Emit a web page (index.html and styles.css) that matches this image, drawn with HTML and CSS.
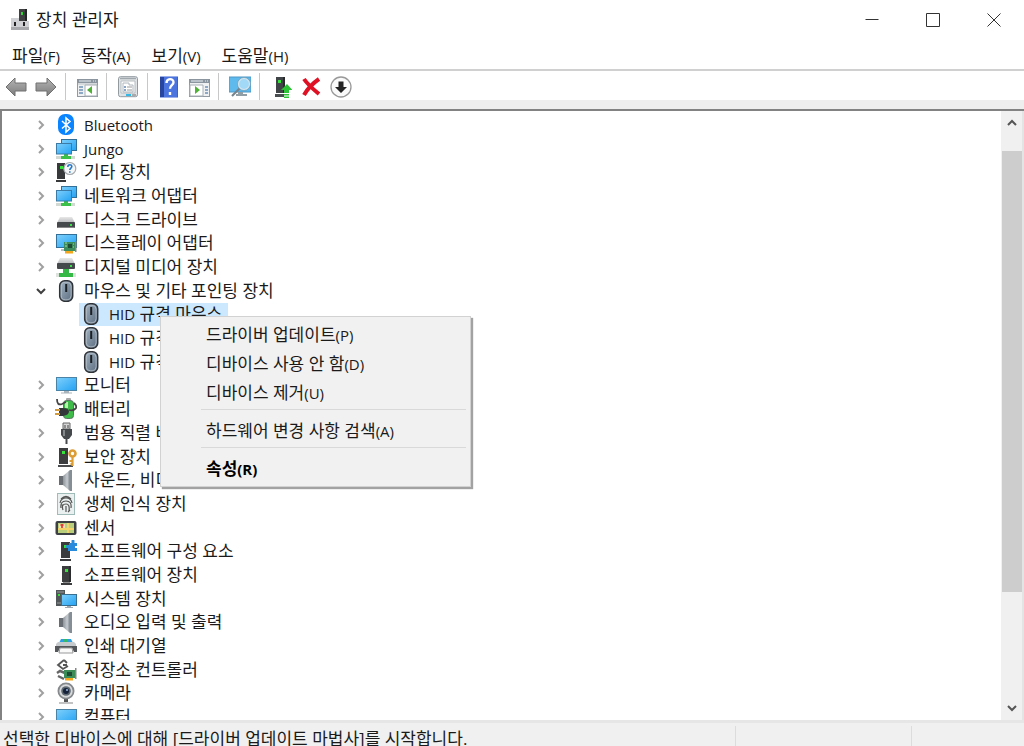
FILE: index.html
```html
<!DOCTYPE html>
<html lang="ko">
<head>
<meta charset="utf-8">
<meta name="viewport" content="width=device-width, initial-scale=1">
<title>장치 관리자</title>
<link rel="stylesheet" href="styles.css">
</head>
<body>
<svg class="sprite" aria-hidden="true">
  <defs>
    <linearGradient id="g-screen" x1="0" y1="0" x2="1" y2="1"><stop offset="0" stop-color="#7fd0fb"/><stop offset="1" stop-color="#22a2f3"/></linearGradient>
    <linearGradient id="g-grey" x1="0" y1="0" x2="0" y2="1"><stop offset="0" stop-color="#e8e8e8"/><stop offset="1" stop-color="#b4b7b9"/></linearGradient>
    <linearGradient id="g-arrow" x1="0" y1="0" x2="0" y2="1"><stop offset="0" stop-color="#b5b5b5"/><stop offset="1" stop-color="#7c7c7c"/></linearGradient>
    <linearGradient id="g-cone" x1="0" y1="0" x2="1" y2="0"><stop offset="0" stop-color="#8d9499"/><stop offset=".6" stop-color="#c5cbd0"/><stop offset="1" stop-color="#7d858b"/></linearGradient>
    <linearGradient id="g-mouse" x1="0" y1="0" x2="1" y2="1"><stop offset="0" stop-color="#a3b4c4"/><stop offset="1" stop-color="#596b7d"/></linearGradient>
    <symbol id="chev-r" viewBox="0 0 10 10"><path d="M3 1l4 4-4 4" fill="none" stroke="#a0a0a0" stroke-width="2"/></symbol>
    <symbol id="chev-d" viewBox="0 0 10 10"><path d="M1 3l4 4 4-4" fill="none" stroke="#404040" stroke-width="2"/></symbol>
    <symbol id="bluetooth" viewBox="0 0 22 22"><rect x="3" y="0" width="16" height="21" rx="7" fill="#0a84ff"/><path d="M7 7l8 7.500-4 3.500V4l4 3.500-8 7" fill="none" stroke="#fff" stroke-width="1.500"/></symbol>
    <symbol id="network" viewBox="0 0 22 22"><rect x="6.500" y="1.500" width="15" height="11" fill="url(#g-screen)" stroke="#326f99"/><path d="M1 18h19v3H1z" fill="#d2d8d2"/><path d="M9 15h4v3h3v3H6v-3h3z" fill="#3cc04a"/><rect x="1.500" y="5.500" width="15" height="10.500" fill="url(#g-screen)" stroke="#3b7ba5"/></symbol>
    <symbol id="tower" viewBox="0 0 22 22"><path d="M7 2h9v16H7z" fill="#3b3d3f"/><path d="M14 2h2v16h-2z" fill="#2b2c2d"/><path d="M6 19h11v2H6z" fill="#3a3c3d"/><path d="M8 18h7v1H8z" fill="#8b8b8b"/><rect x="10" y="5" width="3" height="3" fill="#35e33a"/></symbol>
    <symbol id="unknown" viewBox="0 0 22 22"><path d="M2 2h8v16H2z" fill="#37393a"/><path d="M1 19h10v2H1z" fill="#37393a"/><rect x="5" y="5" width="3" height="3" fill="#35e33a"/><circle cx="14.800" cy="7.500" r="6" fill="#f4f6f8" stroke="#a6aaad" stroke-width="1.200"/><path d="M12.800 6c0-3 4-3 4-.5 0 1.500-2 1.700-2 3.500M14.800 10.200v1.500" fill="none" stroke="#2779c7" stroke-width="1.600"/></symbol>
    <symbol id="disk" viewBox="0 0 22 22"><path d="M5 8h12l3 6H2z" fill="url(#g-grey)"/><rect x="2" y="13" width="18" height="6" rx="1" fill="#46494b"/><path d="M3 18h16v1H3z" fill="#888"/><rect x="15" y="15" width="2" height="2" fill="#3be34b"/></symbol>
    <symbol id="display" viewBox="0 0 22 22"><rect x="1.500" y="2.500" width="20" height="13" fill="url(#g-screen)" stroke="#326f99"/><path d="M6 17h5v2H6z" fill="#b8bec2"/><path d="M9 10h11v9H9z" fill="#3e8c5b"/><path d="M20 9h1.500v11H20z" fill="#888"/><rect x="13" y="12" width="4" height="4" fill="#1f4b35"/><path d="M10 11h2M10 14h2M18 12h1M18 15h1" stroke="#9ed9ae"/><path d="M10 19h8v2.500h-8z" fill="#f3a51c"/></symbol>
    <symbol id="media" viewBox="0 0 22 22"><path d="M5 2h12l3 6H2z" fill="url(#g-grey)"/><rect x="2" y="7" width="18" height="6" rx="1" fill="#46494b"/><rect x="15" y="9" width="2" height="2" fill="#3be34b"/><path d="M1 17h20v4H1z" fill="#dde2dd"/><path d="M8 13h6v4h4v4H4v-4h4z" fill="#35b846"/></symbol>
    <symbol id="mouse" viewBox="0 0 22 22"><rect x="4.700" y=".8" width="13" height="20.500" rx="5" fill="url(#g-mouse)" stroke="#2f3338" stroke-width="1.500"/><rect x="6.300" y="2.300" width="9.800" height="17.500" rx="4" fill="none" stroke="#b9c2ca" stroke-width=".8"/><path d="M11.200 4v8" stroke="#1c1f22" stroke-width="2"/></symbol>
    <symbol id="monitor" viewBox="0 0 22 22"><rect x="1.500" y="3.500" width="20" height="13" fill="url(#g-screen)" stroke="#4a83a6"/><path d="M9 17h5v1.500h3v1H6v-1h3z" fill="#aab3b9"/></symbol>
    <symbol id="battery" viewBox="0 0 22 22"><rect x="11" y="0" width="5" height="3" rx="1" fill="#a7a7a7"/><rect x="8.500" y="2.500" width="10" height="18" rx="3" fill="#3ebb49" stroke="#5b7766"/><path d="M10 4h3v6h-3z" fill="#b6f3ac"/><path d="M2 1q0 7 5 5l4-2M19 5q4 4 1 6-2 2-6 1" fill="none" stroke="#444" stroke-width="1.800"/><path d="M4 10h4q6 0 6 3.500T8 18H4z" fill="#343739"/><path d="M0 12h5M0 16h5" stroke="#d69c39" stroke-width="2"/></symbol>
    <symbol id="usb" viewBox="0 0 22 22"><path d="M8 1h7v6H8z" fill="#d6d6d6" stroke="#676767"/><path d="M9.500 3h1v3h-1zM12.500 3h1v3h-1z" fill="#444"/><path d="M6 7h11v6l-3 4H9l-3-4z" fill="#46494b"/><path d="M8 8h2v6H8z" fill="#85888a"/><path d="M10.500 16h2v6h-2z" fill="#46494b"/></symbol>
    <symbol id="security" viewBox="0 0 22 22"><path d="M4 2h9v16H4z" fill="#3b3d3e"/><path d="M3 19h15v2H3z" fill="#4a4c4e"/><rect x="7" y="5" width="3" height="3" fill="#35e33a"/><circle cx="17.500" cy="7.500" r="3" fill="none" stroke="#dc9d35" stroke-width="2.600"/><path d="M17.500 10v10M17.500 15h-3M17.500 18h-2" stroke="#dc9d35" stroke-width="2.200"/></symbol>
    <symbol id="speaker" viewBox="0 0 22 22"><path d="M4 7h4v9H4z" fill="#676d72"/><path d="M8 7l7-6v21l-7-6z" fill="url(#g-cone)"/><path d="M15 1h2v21h-2z" fill="#858e95"/></symbol>
    <symbol id="finger" viewBox="0 0 22 22"><rect x="2.500" y=".5" width="17" height="21" fill="#e9f0ef" stroke="#9fbcb9"/><g fill="none" stroke="#555" stroke-width="1.200"><path d="M6 6q5-5 10 0M5 10q1-5 6-5t6 5M6 15q-1-7 5-7t5 7M8 17q-2-6 3-6 4 0 3 7M11 13v6M6 12h2M13 19l2-2"/></g></symbol>
    <symbol id="sensor" viewBox="0 0 22 22"><rect x=".5" y="4" width="21" height="14" rx="2" fill="#3e4143"/><rect x="3" y="6" width="16" height="10" fill="#b9cf7d"/><path d="M3 12h16M13 6v10" stroke="#f5d36b" stroke-width="2"/><path d="M4 7h6v4H4z" fill="#eee2b3"/><path d="M7 7v4M5.500 8h3" stroke="#e14037" stroke-width="1.800"/></symbol>
    <symbol id="component" viewBox="0 0 22 22"><path d="M6 2h9v16H6z" fill="#393b3d"/><path d="M5 19h11v2H5z" fill="#393b3d"/><rect x="9" y="5" width="3" height="3" fill="#35e33a"/><path d="M14 3h2.500V1a1.500 1.500 0 0 1 3 0v2H22v3h-2v2h2v3h-9V8h-1a1.500 1.500 0 0 1 0-3h2z" fill="#288bdc"/></symbol>
    <symbol id="system" viewBox="0 0 22 22"><path d="M1 2h9v16H1z" fill="#515759"/><path d="M2 4h7M2 15h5" stroke="#999"/><rect x="3" y="6" width="2" height="2" fill="#35e33a"/><rect x="6.500" y="6.500" width="15" height="11" fill="url(#g-screen)" stroke="#386f91"/><path d="M12 18h4v1h2v1h-8v-1h2z" fill="#a0a9af"/></symbol>
    <symbol id="printer" viewBox="0 0 22 22"><path d="M6 4h10l2 4H4z" fill="#2e9ee2"/><path d="M9 4h4v3H9z" fill="#35b86a"/><path d="M1 9l2-2h16l2 2v3H1z" fill="#c7cacc"/><path d="M0 11h22v6h-3l-2-4H5l-2 4H0z" fill="#55585a"/><path d="M5 13h12l1 5H4z" fill="#fafafa" stroke="#999"/></symbol>
    <symbol id="storage" viewBox="0 0 22 22"><path d="M9 1L3 6l5 4 5-3M8 6h4M9 1l3 3" fill="none" stroke="#555" stroke-width="1.800"/><path d="M2 14l3-2 5 2M3 17l6 3" fill="none" stroke="#666" stroke-width="2.500"/><path d="M9 11h11v8H9z" fill="#3b8c57"/><path d="M20 9h1.500v11H20z" fill="#888"/><rect x="12" y="13" width="5" height="4" fill="#1f4b35"/><path d="M10 19h8v2.500h-8z" fill="#f3a51c"/></symbol>
    <symbol id="camera" viewBox="0 0 22 22"><path d="M9 17h4v3H9z" fill="#555"/><path d="M4 21h14" stroke="#aaa" stroke-width="1.400"/><circle cx="11" cy="9" r="7.600" fill="#d7d9da" stroke="#85898c" stroke-width="1.800"/><circle cx="11" cy="9" r="4.800" fill="#5e6870"/><circle cx="11" cy="9" r="3" fill="#16233b"/><circle cx="12" cy="8" r="1" fill="#9ab7dd"/></symbol>
  </defs>
</svg>

<div class="window">
  <header class="titlebar">
    <svg class="app-icon" viewBox="0 0 22 22" aria-hidden="true"><path d="M9 0h8v12H9z" fill="#3e4042"/><path d="M15 0h2v12h-2z" fill="#242526"/><rect x="11" y="3" width="2" height="3" fill="#35d33a"/><path d="M1 9h8v3h10v9H1z" fill="#cfd1d4"/><path d="M1 18h18v3H1z" fill="#a7a9ac"/><path d="M4 13h2v4H4zM13 13h2v4h-2z" fill="#222"/></svg>
    <h1 class="title">장치 관리자</h1>
    <div class="controls">
      <button class="control" type="button" aria-label="최소화"><svg viewBox="0 0 14 14"><path d="M.5 6.500h13"/></svg></button>
      <button class="control" type="button" aria-label="최대화"><svg viewBox="0 0 14 14"><path d="M.5.500h13v13H.5z"/></svg></button>
      <button class="control" type="button" aria-label="닫기"><svg viewBox="0 0 14 14"><path d="M.5.500l13 13M13.500.500l-13 13"/></svg></button>
    </div>
  </header>

  <nav class="menubar">
    <button type="button">파일<span class="key">(F)</span></button>
    <button type="button">동작<span class="key">(A)</span></button>
    <button type="button">보기<span class="key">(V)</span></button>
    <button type="button">도움말<span class="key">(H)</span></button>
  </nav>

  <div class="toolbar" role="toolbar">
    <button type="button" aria-label="뒤로"><svg viewBox="0 0 22 22"><path d="M1 11l9-9v5h11v8H10v5z" fill="url(#g-arrow)" stroke="#707070"/></svg></button>
    <button type="button" aria-label="앞으로"><svg viewBox="0 0 22 22"><path d="M21 11l-9-9v5H1v8h11v5z" fill="url(#g-arrow)" stroke="#707070"/></svg></button>
    <span class="sep"></span>
    <button type="button" aria-label="콘솔 트리 표시"><svg viewBox="0 0 22 22"><rect x="1.500" y="3.500" width="20" height="17" fill="#eef0f1" stroke="#9299a0"/><path d="M1 3h21v4H1z" fill="#8b95a0"/><path d="M3 5h12M17 5h1M19 5h1" stroke="#e8edf2"/><path d="M2 8h19" stroke="#bcc3c9"/><path d="M3 11h4M3 14h4M3 17h4" stroke="#6e91b7" stroke-width="1.500"/><path d="M9 9h12v11H9z" fill="#fff" stroke="#a7b0b5"/><path d="M16 10v8l-5-4z" fill="#4fb135"/></svg></button>
    <span class="sep"></span>
    <button type="button" aria-label="속성"><svg viewBox="0 0 22 22"><rect x="1.500" y=".7" width="19" height="20" rx="2" fill="#dfe3e6" stroke="#929aa0"/><path d="M3 2.500h16" stroke="#a1a9af" stroke-width="1.500"/><path d="M4 5h14v12H4z" fill="#fff" stroke="#b7bcc0"/><path d="M6 7h6v2h4v7H6z" fill="none" stroke="#aeb6bc"/><path d="M7 11h2M7 14h2" stroke="#6288b5" stroke-width="1.500"/><path d="M10 11h5M10 14h5" stroke="#999"/><path d="M9 19h5" stroke="#36b7e6" stroke-width="2"/><path d="M15 19h4" stroke="#aaa" stroke-width="2"/></svg></button>
    <span class="sep"></span>
    <button type="button" aria-label="도움말"><svg viewBox="0 0 22 22"><rect x="2" y=".5" width="18" height="21" fill="#3861d5"/><path d="M2 1h4v20H2z" fill="#27459f"/><path d="M6 1h13v20H6z" fill="#4c74df"/><path d="M8.500 7c0-5 7-5 7-.8 0 3-3.500 3-3.500 6.500M12 16v3" fill="none" stroke="#fff" stroke-width="2.400"/></svg></button>
    <button type="button" aria-label="동작 창 표시"><svg viewBox="0 0 22 22"><rect x="1.500" y="3.500" width="20" height="17" fill="#eef0f1" stroke="#9299a0"/><path d="M1 3h21v4H1z" fill="#8b95a0"/><path d="M3 5h12M17 5h1M19 5h1" stroke="#e8edf2"/><path d="M2 9h13v11H2z" fill="#fff" stroke="#a7b0b5"/><path d="M7 10v8l5-4z" fill="#4fb135"/><path d="M17 11h3M17 14h3M17 17h3" stroke="#6e91b7" stroke-width="1.500"/></svg></button>
    <span class="sep"></span>
    <button type="button" aria-label="하드웨어 변경 사항 검색"><svg viewBox="0 0 22 22"><rect x="0" y="1" width="22" height="15" fill="#5eb9ed" stroke="#4c9ac8"/><path d="M9 16h5v2h4v2H7v-2h2z" fill="#929ea5"/><path d="M11 12l-8 8" stroke="#76838b" stroke-width="2.200"/><circle cx="15" cy="8" r="5.700" fill="#a2d9f7" stroke="#d7e7ef" stroke-width="1.500"/><circle cx="15" cy="8" r="6.500" fill="none" stroke="#6e9ab2" stroke-width=".7"/></svg></button>
    <span class="sep"></span>
    <button type="button" aria-label="드라이버 업데이트"><svg viewBox="0 0 22 22"><path d="M6 1h9v16H6z" fill="#414447"/><path d="M13 1h2v16h-2z" fill="#292b2c"/><path d="M5 18h9v3H5z" fill="#4b4e50"/><rect x="8" y="4" width="3" height="3" fill="#35e33a"/><path d="M17 8l5.500 6H19v3h-5v-3h-3zM14 18h5v1.500h-5zM14 20.500h5V22h-5z" fill="#2dc337"/></svg></button>
    <button type="button" aria-label="디바이스 제거"><svg viewBox="0 0 22 22"><path d="M4 3q4 6 15 15M19 3Q9 10 4 19" fill="none" stroke="#de1224" stroke-width="4"/></svg></button>
    <button type="button" aria-label="사용 안 함"><svg viewBox="0 0 22 22"><circle cx="11" cy="11" r="10" fill="#fafafa" stroke="#999" stroke-width="1.300"/><path d="M8.500 5.500h5V11H17l-6 6-6-6h3.500z" fill="#222"/></svg></button>
  </div>

  <main class="pane">
    <ul class="tree" role="tree">
      <li class="row"><button class="toggle" type="button" aria-label="펼치기"><svg><use href="#chev-r"/></svg></button><span class="node"><svg class="icon"><use href="#bluetooth"/></svg><span class="latin">Bluetooth</span></span></li>
      <li class="row"><button class="toggle" type="button" aria-label="펼치기"><svg><use href="#chev-r"/></svg></button><span class="node"><svg class="icon"><use href="#network"/></svg><span class="latin">Jungo</span></span></li>
      <li class="row"><button class="toggle" type="button" aria-label="펼치기"><svg><use href="#chev-r"/></svg></button><span class="node"><svg class="icon"><use href="#unknown"/></svg>기타 장치</span></li>
      <li class="row"><button class="toggle" type="button" aria-label="펼치기"><svg><use href="#chev-r"/></svg></button><span class="node"><svg class="icon"><use href="#network"/></svg>네트워크 어댑터</span></li>
      <li class="row"><button class="toggle" type="button" aria-label="펼치기"><svg><use href="#chev-r"/></svg></button><span class="node"><svg class="icon"><use href="#disk"/></svg>디스크 드라이브</span></li>
      <li class="row"><button class="toggle" type="button" aria-label="펼치기"><svg><use href="#chev-r"/></svg></button><span class="node"><svg class="icon"><use href="#display"/></svg>디스플레이 어댑터</span></li>
      <li class="row"><button class="toggle" type="button" aria-label="펼치기"><svg><use href="#chev-r"/></svg></button><span class="node"><svg class="icon"><use href="#media"/></svg>디지털 미디어 장치</span></li>
      <li class="row"><button class="toggle" type="button" aria-label="접기"><svg><use href="#chev-d"/></svg></button><span class="node"><svg class="icon"><use href="#mouse"/></svg>마우스 및 기타 포인팅 장치</span></li>
      <li class="row child"><span class="node selected"><svg class="icon"><use href="#mouse"/></svg><span><span class="latin">HID</span> 규격 마우스</span></span></li>
      <li class="row child"><span class="node"><svg class="icon"><use href="#mouse"/></svg><span><span class="latin">HID</span> 규격 마우스</span></span></li>
      <li class="row child"><span class="node"><svg class="icon"><use href="#mouse"/></svg><span><span class="latin">HID</span> 규격 마우스</span></span></li>
      <li class="row"><button class="toggle" type="button" aria-label="펼치기"><svg><use href="#chev-r"/></svg></button><span class="node"><svg class="icon"><use href="#monitor"/></svg>모니터</span></li>
      <li class="row"><button class="toggle" type="button" aria-label="펼치기"><svg><use href="#chev-r"/></svg></button><span class="node"><svg class="icon"><use href="#battery"/></svg>배터리</span></li>
      <li class="row"><button class="toggle" type="button" aria-label="펼치기"><svg><use href="#chev-r"/></svg></button><span class="node"><svg class="icon"><use href="#usb"/></svg>범용 직렬 버스 컨트롤러</span></li>
      <li class="row"><button class="toggle" type="button" aria-label="펼치기"><svg><use href="#chev-r"/></svg></button><span class="node"><svg class="icon"><use href="#security"/></svg>보안 장치</span></li>
      <li class="row"><button class="toggle" type="button" aria-label="펼치기"><svg><use href="#chev-r"/></svg></button><span class="node"><svg class="icon"><use href="#speaker"/></svg>사운드, 비디오 및 게임 컨트롤러</span></li>
      <li class="row"><button class="toggle" type="button" aria-label="펼치기"><svg><use href="#chev-r"/></svg></button><span class="node"><svg class="icon"><use href="#finger"/></svg>생체 인식 장치</span></li>
      <li class="row"><button class="toggle" type="button" aria-label="펼치기"><svg><use href="#chev-r"/></svg></button><span class="node"><svg class="icon"><use href="#sensor"/></svg>센서</span></li>
      <li class="row"><button class="toggle" type="button" aria-label="펼치기"><svg><use href="#chev-r"/></svg></button><span class="node"><svg class="icon"><use href="#component"/></svg>소프트웨어 구성 요소</span></li>
      <li class="row"><button class="toggle" type="button" aria-label="펼치기"><svg><use href="#chev-r"/></svg></button><span class="node"><svg class="icon"><use href="#tower"/></svg>소프트웨어 장치</span></li>
      <li class="row"><button class="toggle" type="button" aria-label="펼치기"><svg><use href="#chev-r"/></svg></button><span class="node"><svg class="icon"><use href="#system"/></svg>시스템 장치</span></li>
      <li class="row"><button class="toggle" type="button" aria-label="펼치기"><svg><use href="#chev-r"/></svg></button><span class="node"><svg class="icon"><use href="#speaker"/></svg>오디오 입력 및 출력</span></li>
      <li class="row"><button class="toggle" type="button" aria-label="펼치기"><svg><use href="#chev-r"/></svg></button><span class="node"><svg class="icon"><use href="#printer"/></svg>인쇄 대기열</span></li>
      <li class="row"><button class="toggle" type="button" aria-label="펼치기"><svg><use href="#chev-r"/></svg></button><span class="node"><svg class="icon"><use href="#storage"/></svg>저장소 컨트롤러</span></li>
      <li class="row"><button class="toggle" type="button" aria-label="펼치기"><svg><use href="#chev-r"/></svg></button><span class="node"><svg class="icon"><use href="#camera"/></svg>카메라</span></li>
      <li class="row"><button class="toggle" type="button" aria-label="펼치기"><svg><use href="#chev-r"/></svg></button><span class="node"><svg class="icon"><use href="#monitor"/></svg>컴퓨터</span></li>
    </ul>
    <div class="scrollbar">
      <button type="button" aria-label="위로 스크롤"><svg viewBox="0 0 10 10"><path d="M1 7l4-4 4 4"/></svg></button>
      <div class="track"><div class="thumb"></div></div>
      <button type="button" aria-label="아래로 스크롤"><svg viewBox="0 0 10 10"><path d="M1 3l4 4 4-4"/></svg></button>
    </div>
  </main>

  <footer class="status">
    <span class="status-text">선택한 디바이스에 대해 [드라이버 업데이트 마법사]를 시작합니다.</span>
    <span class="status-cell"></span>
    <span class="status-cell last"></span>
  </footer>

  <div class="context" role="menu">
    <button type="button" role="menuitem">드라이버 업데이트<span class="key">(P)</span></button>
    <button type="button" role="menuitem">디바이스 사용 안 함<span class="key">(D)</span></button>
    <button type="button" role="menuitem">디바이스 제거<span class="key">(U)</span></button>
    <hr>
    <button type="button" role="menuitem">하드웨어 변경 사항 검색<span class="key">(A)</span></button>
    <hr>
    <button class="default" type="button" role="menuitem">속성<span class="key">(R)</span></button>
  </div>
</div>
</body>
</html>
```
FILE: styles.css
```css
* { box-sizing: border-box; }

body {
  margin: 0;
  background: #fff;
  color: #1a1a1a;
  font: 17px/24px "Open Sans", "Noto Sans CJK KR", sans-serif;
}

button {
  margin: 0;
  padding: 0;
  border: 0;
  background: none;
  color: inherit;
  font: inherit;
}

svg { display: block; }

.sprite {
  position: absolute;
  width: 0;
  height: 0;
}

.latin, .key { font-size: 15px; }

.window {
  position: relative;
  display: flex;
  flex-direction: column;
  height: 100vh;
  overflow: hidden;
}

/* Title bar */
.titlebar {
  display: flex;
  align-items: center;
  flex: none;
  height: 40px;
  padding-left: 10px;
}

.app-icon {
  width: 22px;
  height: 22px;
}

.title {
  flex: 1;
  margin: 0 0 0 4px;
  font-size: 17px;
  font-weight: 400;
}

.controls { display: flex; }

.control {
  display: grid;
  place-items: center;
  width: 61px;
  height: 40px;
}

.control svg {
  width: 14px;
  height: 14px;
  fill: none;
  stroke: #333;
  stroke-width: 1;
}

/* Menu bar */
.menubar {
  display: flex;
  flex: none;
  gap: 21px;
  height: 31px;
  padding: 3px 12px 0;
  border-bottom: 2px solid #d0d0d0;
}

/* Toolbar */
.toolbar {
  display: flex;
  align-items: center;
  flex: none;
  gap: 8px;
  height: 38px;
  padding: 2px 5px 0;
  border-bottom: 9px solid #eee;
}

.toolbar button, .toolbar svg {
  width: 22px;
  height: 22px;
}

.sep {
  width: 1px;
  height: 27px;
  margin-right: 2px;
  background: #c8c8c8;
}

/* Device tree */
.pane {
  display: flex;
  flex: 1;
  min-height: 0;
  overflow: hidden;
  border: solid #828282;
  border-width: 2px 0 0 2px;
}

.tree {
  display: grid;
  flex: 1;
  grid-auto-rows: minmax(23px, 1fr);
  height: calc(100% + 9px);
  margin: 0;
  padding: 2px 0 0;
  list-style: none;
}

.row {
  display: flex;
  align-items: center;
  gap: 4px;
  padding-left: 29px;
}

.child { padding-left: 77px; }

.toggle {
  display: grid;
  place-items: center;
  width: 20px;
  height: 20px;
}

.toggle svg {
  width: 10px;
  height: 10px;
}

.node {
  display: flex;
  align-items: center;
  gap: 7px;
  height: 100%;
  white-space: nowrap;
}

.child .node { padding: 0 6px 0 1px; }

.selected { background: #cce8ff; }

.icon {
  width: 22px;
  height: 22px;
}

/* Scroll bar */
.scrollbar {
  display: flex;
  flex-direction: column;
  width: 23px;
  border-right: 2px solid #e4e4e4;
  background: #f0f0f0;
}

.scrollbar button {
  display: grid;
  place-items: center;
  height: 24px;
}

.scrollbar svg {
  width: 10px;
  height: 10px;
  fill: none;
  stroke: #555;
  stroke-width: 2;
}

.track {
  flex: 1;
  padding: 16px 0 0 1px;
}

.thumb {
  height: 81%;
  background: #cdcdcd;
}

/* Status bar */
.status {
  display: flex;
  flex: none;
  height: 26px;
  overflow: hidden;
  padding-left: 3px;
  border-top: 3px solid #e6e6e6;
  background: #f0f0f0;
  line-height: 32px;
  white-space: nowrap;
}

.status-text { flex: 1; }

.status-cell {
  width: 176px;
  margin-top: 3px;
  border-left: 1px solid #dcdcdc;
}

.last { width: 113px; }

/* Context menu */
.context {
  position: absolute;
  top: 316px;
  left: 160px;
  display: flex;
  flex-direction: column;
  width: 311px;
  padding: 3px 0;
  border: 1px solid #d2d2d2;
  background: #f1f1f1;
  box-shadow: 2px 2px 1px #a2a2a2;
}

.context button {
  height: 29px;
  padding: 0 45px;
  text-align: left;
}

.context hr {
  width: auto;
  margin: 2px 4px 6px 40px;
  border: 0;
  border-top: 1px solid #d9d9d9;
}

.context .default {
  color: #000;
  font-weight: 700;
}
```
